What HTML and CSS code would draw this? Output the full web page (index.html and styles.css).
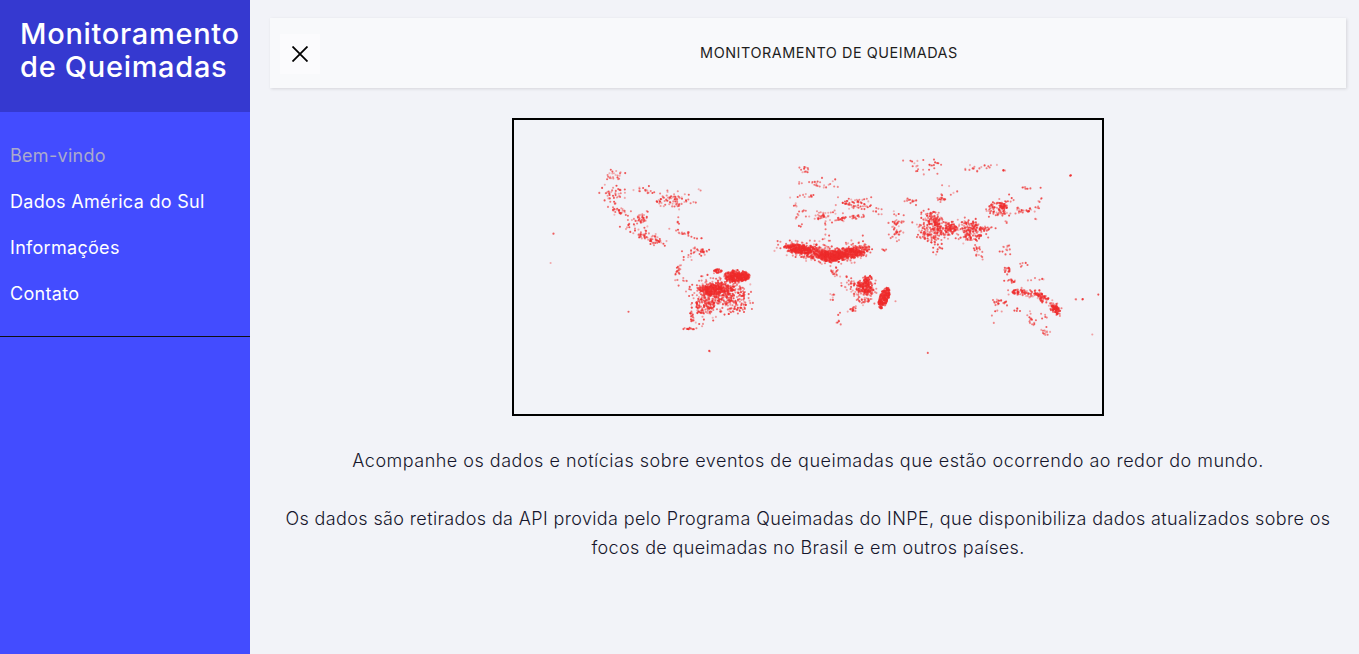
FILE: index.html
```html
<!DOCTYPE html>
<html lang="pt-BR">
<head>
<meta charset="utf-8">
<title>Monitoramento de Queimadas</title>
<link rel="stylesheet" href="styles.css">
</head>
<body>
<div class="wrapper">
  <nav class="sidebar">
    <div class="sidebar-header"><h3>Monitoramento de Queimadas</h3></div>
    <ul class="menu">
      <li class="active"><a href="#">Bem-vindo</a></li>
      <li><a href="#">Dados América do Sul</a></li>
      <li><a href="#">Informações</a></li>
      <li><a href="#">Contato</a></li>
    </ul>
  </nav>
  <main class="content">
    <header class="topbar">
      <button class="toggle" aria-label="Fechar">
        <svg width="16" height="16" viewBox="0 0 16 16"><path d="M0.5 0.5 L15.5 15.5 M15.5 0.5 L0.5 15.5" stroke="#000" stroke-width="1.8" fill="none"/></svg>
      </button>
      <span class="topbar-title">MONITORAMENTO DE QUEIMADAS</span>
    </header>
    <div class="map-frame">
      <svg id="map" class="map" viewBox="514 120 588 294" width="588" height="294"></svg>
    </div>
    <section class="intro">
      <p>Acompanhe os dados e notícias sobre eventos de queimadas que estão ocorrendo ao redor do mundo.</p>
      <p>Os dados são retirados da API provida pelo Programa Queimadas do INPE, que disponibiliza dados atualizados sobre os focos de queimadas no Brasil e em outros países.</p>
    </section>
  </main>
</div>
<script src="map.js"></script>
</body>
</html>
```
FILE: styles.css
```css
* { box-sizing: border-box; }
html, body { margin: 0; height: 100%; overflow: hidden; }
body {
  font-family: "Inter", "Open Sans", sans-serif;
  background: #f2f3f8;
  color: #212529;
}
.wrapper { display: flex; height: 654px; }
.sidebar { width: 250px; flex: none; background: #434cff; color: #fff; }
.sidebar-header { height: 112px; background: #3539d0; padding: 17px 0 0 20px; }
.sidebar-header h3 { margin: 0; font-size: 29px; line-height: 33px; font-weight: 500; letter-spacing: 0.7px; width: 228px; }
.menu { list-style: none; margin: 0; padding: 20px 0; border-bottom: 1px solid #111; }
.menu li { height: 46px; padding-left: 10px; display: flex; align-items: center; }
.menu a { color: #fff; text-decoration: none; font-size: 18px; font-weight: 420; white-space: nowrap; letter-spacing: 0.3px; }
.menu .active a { color: #aaaacc; font-weight: 400; }
.content { flex: 1; min-width: 0; padding: 18px 13px 0 20px; display: flex; flex-direction: column; align-items: center; }
.topbar {
  position: relative;
  width: 100%; height: 70px; flex: none;
  background: #f8f9fb;
  box-shadow: 1px 1px 3px rgba(0,0,0,.12);
  display: flex; align-items: center; justify-content: center;
  padding: 0 0 2px 42px;
}
.toggle {
  position: absolute; left: 10px; top: 16px;
  width: 40px; height: 40px; border: 0; padding: 0;
  background: #fbfbfd;
  display: flex; align-items: center; justify-content: center;
}
.topbar-title { font-size: 14.4px; font-weight: 400; letter-spacing: 0.55px; color: #1d1d1d; }
.map-frame { margin-top: 30px; width: 592px; height: 298px; flex: none; border: 2px solid #000; }
.map { display: block; filter: blur(0.45px); }
.intro { width: 100%; margin-top: 30px; text-align: center; font-size: 18px; line-height: 29px; font-weight: 300; letter-spacing: 0.5px; color: #16162c; }
.intro p { margin: 0 0 29px; }
.intro p + p { letter-spacing: 0.37px; }
```
FILE: map.js
```js
// Fire-focus clusters in page coordinates: cx, cy, rx, ry, count, rotation (deg), tight (no outliers)
var clusters = [
  // North America
  [616,175,10,4,14,0],[612,193,9,9,26,0],[620,211,8,4,20,25],[633,225,9,7,14,0],[642,218,5,5,20,0],
  [650,238,13,4,40,15],[644,190,7,3,10,10],[672,201,15,6,45,0],[678,222,3,3,5,0],[685,233,11,2,10,15],[700,238,5,1,3,0],
  [668,190,3,3,2,0],[700,190,2,2,2,0],[660,244,8,3,4,0],
  [553,234,1,1,2,0],[550,263,1,1,1,0],[629,311,1,1,1,0],[710,351,1,1,2,0],
  // South America
  [697,252,12,4,12,0],[703,251,3,2,8,0],[690,258,7,4,6,0],[678,274,3,8,12,0],[683,281,4,3,5,0],
  [718,271,4,2,20,0,1],[737,276,13,6,130,0,1],[738,277,11,4,130,0,1],[715,290,18,7,150,0],[712,290,12,5,90,0,1],[725,292,20,13,170,0],
  [705,305,10,9,90,0],[735,305,12,7,45,0],[692,315,2,8,12,0],[690,329,4,1,8,0],[700,326,6,4,5,0],[717,318,8,3,3,0],
  // Europe & North Africa
  [805,170,4,3,8,0],[800,182,5,2,3,0],[822,184,11,4,14,0],[805,196,10,2,8,0],[800,210,7,9,10,0],
  [857,203,15,5,36,5],[835,212,8,2,6,0],[822,217,10,5,22,10],[841,219,4,2,12,0],[857,217,7,2,12,0],[878,212,5,4,6,0],
  [827,237,3,5,5,0],[884,250,4,1,4,0],[798,226,4,3,2,0],
  // Central Africa band
  [797,249,13,5,110,8],[800,249,12,4,100,8,1],[815,253,11,6,120,8],[830,256,11,6,130,0],[830,257,12,4,100,0,1],[845,254,14,6,150,-3],[849,254,13,4,100,-5,1],[860,250,10,5,70,-15],[805,250,22,7,20,8],[830,246,30,8,16,0],
  // Southern Africa
  [835,272,5,5,10,0],[850,283,8,8,16,0],[864,287,8,8,80,0],[864,287,6,6,50,0,1],[868,280,4,6,25,0],[872,292,3,3,12,0],[863,298,9,5,20,0],
  [832,297,4,4,7,0],[853,310,4,3,10,0],[838,322,3,2,5,0],[839,314,2,2,2,0],
  // Madagascar
  [884,298,4.5,11,170,20,1],[896,301,1,1,1,0],
  // Middle East, Russia
  [925,165,18,7,16,0],[910,201,6,3,9,0],[941,199,5,2,9,0],[897,213,4,3,4,0],[892,222,6,3,5,0],
  [898,228,4,9,22,15],[890,237,3,3,4,0],[975,169,16,4,8,0],[990,165,8,3,4,0],[1004,171,3,1,4,0],
  [950,190,16,7,7,0],[1070,175,1,1,3,0],[1040,187,1,1,1,0],
  // India
  [932,218,8,5,45,20],[930,228,12,7,60,0],[943,228,12,7,70,15],[953,228,4,4,25,0],[930,238,8,4,25,20],[936,248,4,7,8,0],
  // South-East Asia, China
  [969,226,10,6,55,0],[972,235,10,6,50,0],[985,229,6,2,14,0],[994,228,4,1,3,0],[977,248,4,6,8,0],[978,258,5,5,7,0],
  [998,209,10,7,55,0],[1003,206,3,3,15,0],[1008,200,6,3,6,-30],[1017,208,3,2,5,0],[1030,210,10,2,14,-10],[1026,188,4,1,7,0],
  [1040,200,2,3,4,0],[1036,219,1,1,2,0],[1005,222,3,2,3,0],
  // Indonesia, Australia
  [1007,248,5,4,8,0],[1007,270,3,3,12,0],[1012,281,5,2,8,0],[1035,280,10,2,5,0],[1020,292,8,3,36,0],[1033,293,5,3,20,0],
  [1043,298,7,4,36,25],[1055,308,4,3,45,20],[1058,312,3,3,16,0],[1000,302,6,3,14,0],[1018,310,4,2,5,0],[1030,314,3,4,4,0],
  [1032,322,3,4,8,0],[1045,320,4,6,6,0],[1045,332,3,2,8,0],[997,315,3,8,5,0],[1080,300,5,2,4,0],
  [1093,334,1,1,1,0],[1099,294,1,1,1,0],[927,353,1,1,1,0],[1023,265,4,3,6,0],[1043,279,2,2,1,0]
];
var seed = 20240611;
function rnd() {
  seed = (seed + 0x6D2B79F5) | 0;
  var t = Math.imul(seed ^ (seed >>> 15), 1 | seed);
  t = (t + Math.imul(t ^ (t >>> 7), 61 | t)) ^ t;
  return ((t ^ (t >>> 14)) >>> 0) / 4294967296;
}
var NS = "http://www.w3.org/2000/svg";
var svg = document.getElementById("map");
var frag = document.createDocumentFragment();
clusters.forEach(function (c) {
  var a = c[5] * Math.PI / 180, cos = Math.cos(a), sin = Math.sin(a);
  var n = c[4] >= 8 ? Math.round(c[4] * 1.6) : c[4];
  for (var i = 0; i < n; i++) {
    var t = rnd() * 2 * Math.PI, r = Math.sqrt(rnd());
    // A quarter of the foci spread past the cluster's core, when it is large enough.
    if (!c[6] && c[4] >= 5 && rnd() < 0.25) r *= 1.7;
    var x = r * c[2] * Math.cos(t), y = r * c[3] * Math.sin(t);
    var dot = document.createElementNS(NS, "circle");
    dot.setAttribute("cx", (c[0] + x * cos - y * sin).toFixed(1));
    dot.setAttribute("cy", (c[1] + x * sin + y * cos).toFixed(1));
    dot.setAttribute("r", "1.05");
    dot.setAttribute("fill", "#ee2c2c");
    dot.setAttribute("fill-opacity", (0.3 + rnd() * 0.55).toFixed(2));
    frag.appendChild(dot);
  }
});
svg.appendChild(frag);
```
